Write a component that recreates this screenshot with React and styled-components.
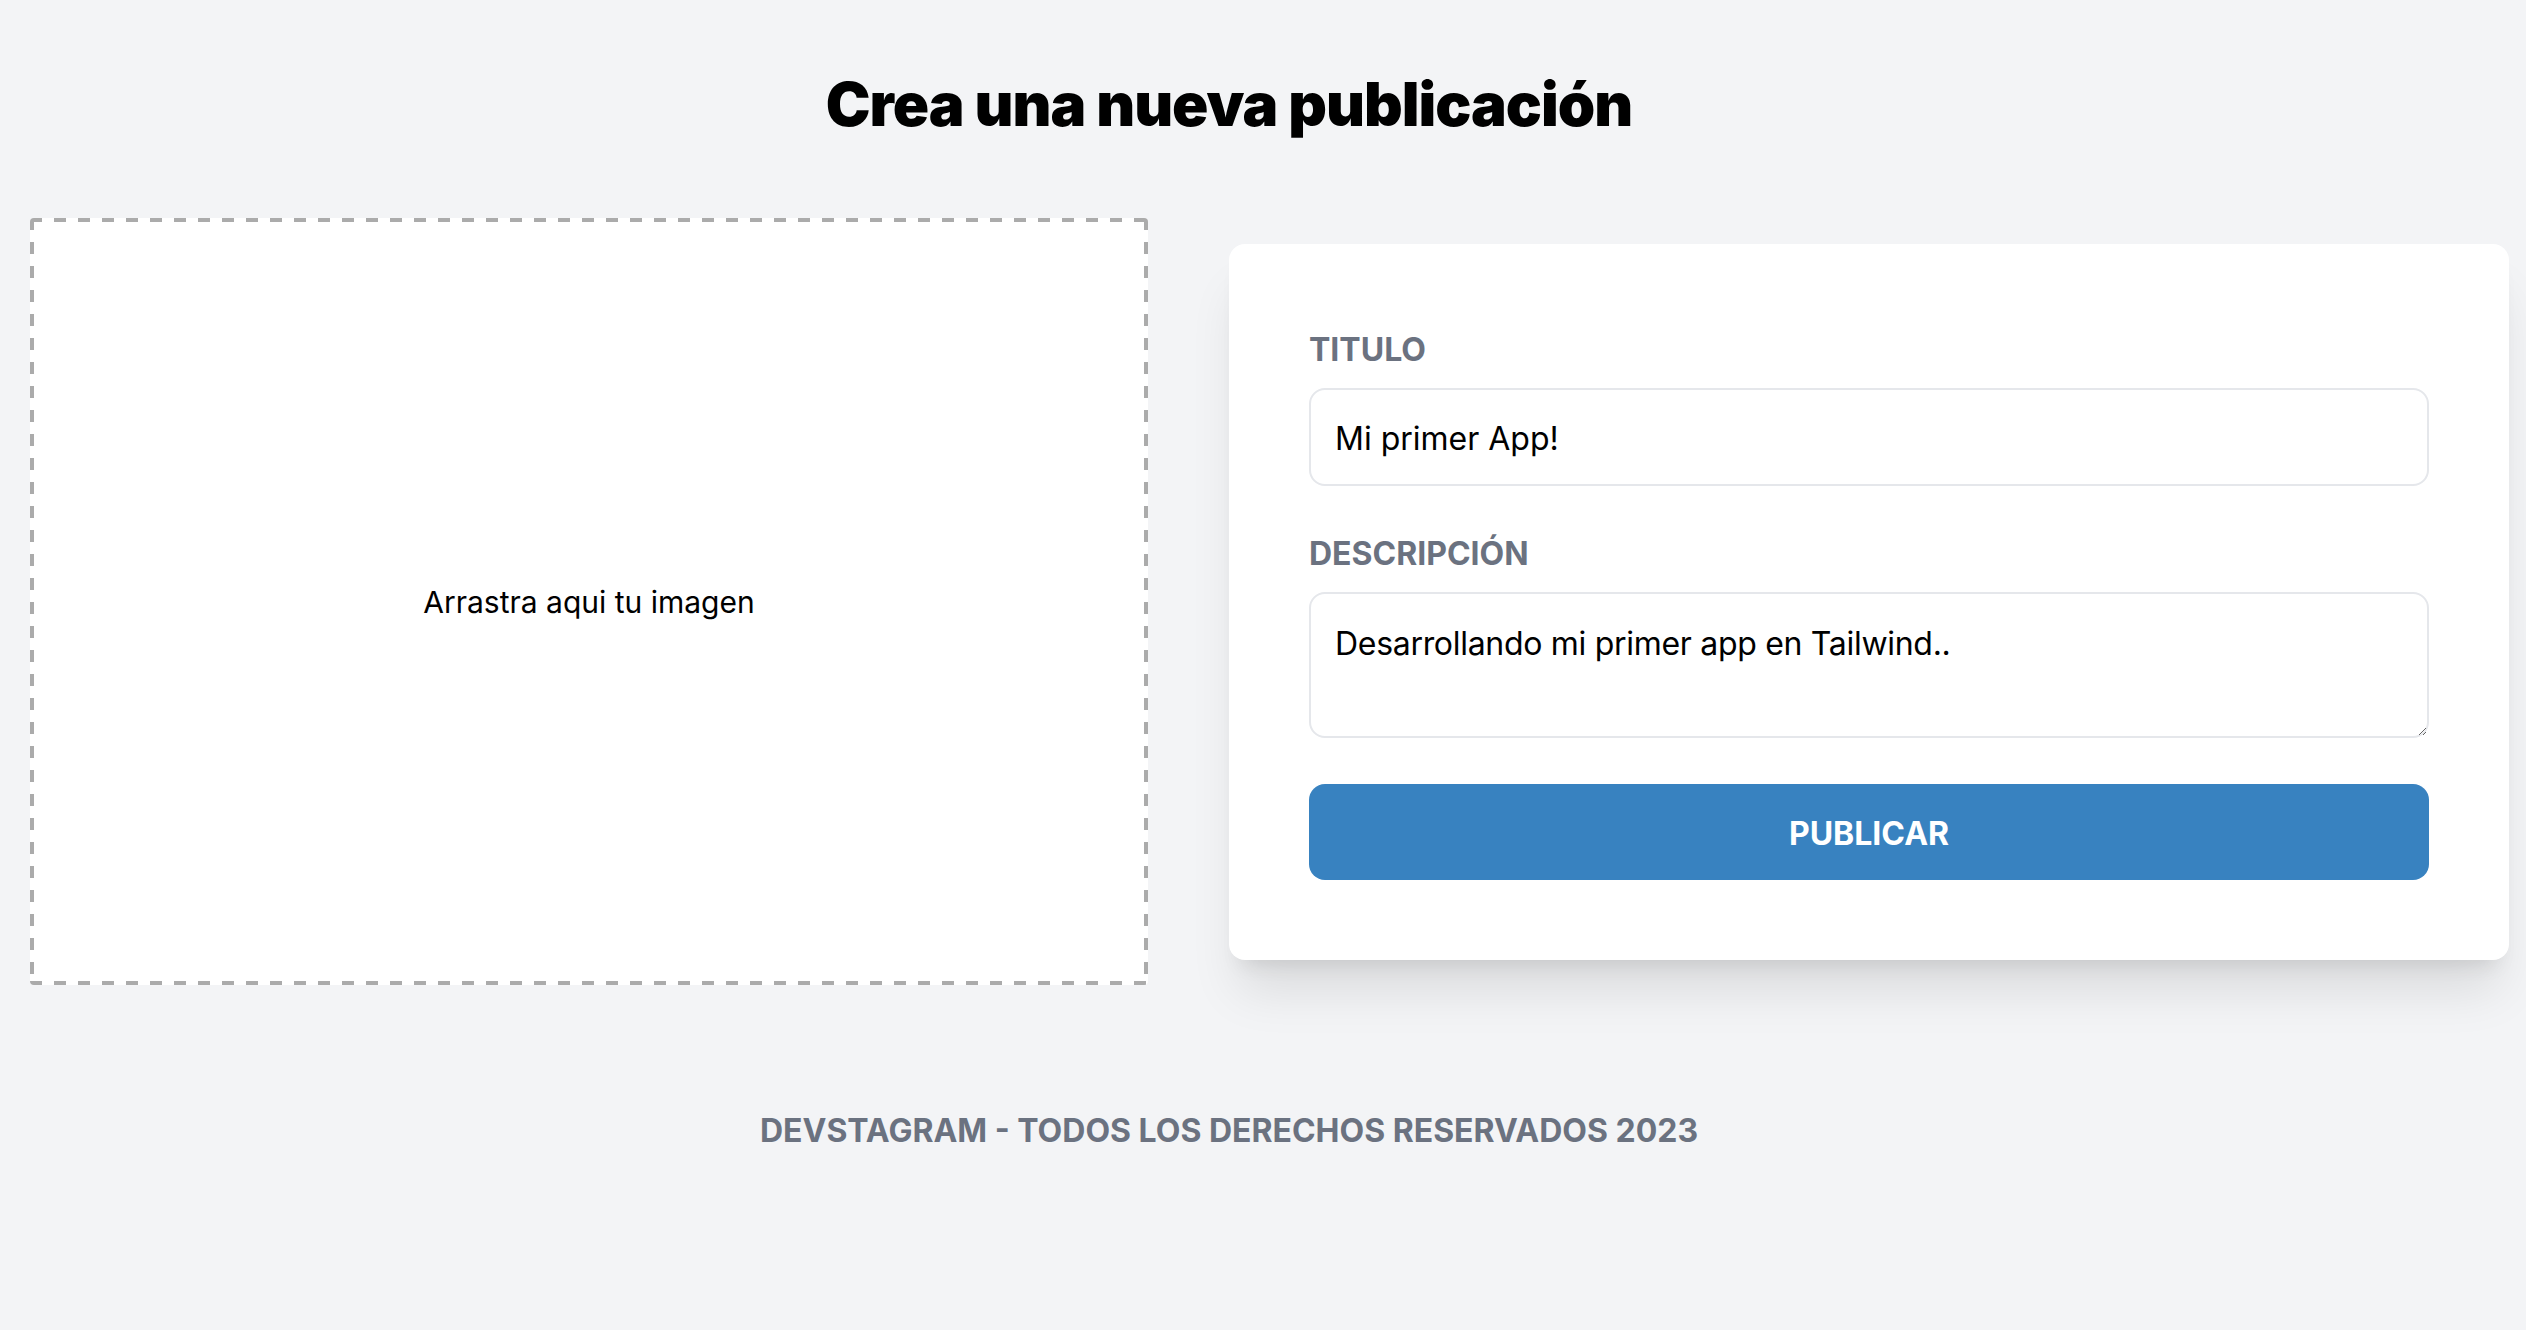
import React from 'react';
import styled, { createGlobalStyle } from 'styled-components';

const GlobalStyle = createGlobalStyle`
  body {
    margin: 0;
    background: #f3f4f6;
    font-family: Inter, "Noto Sans", sans-serif;
    color: #000;
  }
`;

const dash = '#ababab';

const Page = styled.main`
  width: 2526px;
  padding-top: 68px;
`;

const Heading = styled.h2`
  width: 2458px;
  margin: 0 0 78px;
  text-align: center;
  font-size: 60px;
  line-height: 72px;
  font-weight: 900;
  letter-spacing: -1px;
`;

const Row = styled.div`
  display: flex;
  align-items: center;
  gap: 81px;
  padding-left: 30px;
`;

// dashed edge drawn with gradients so the dash length matches (12px on, 12px off)
const DropZone = styled.div`
  flex: 0 0 1118px;
  height: 767px;
  box-sizing: border-box;
  border-radius: 4px;
  background:
    repeating-linear-gradient(90deg, ${dash} 0 12px, transparent 12px 24px) left top / 100% 4px no-repeat,
    repeating-linear-gradient(90deg, ${dash} 0 12px, transparent 12px 24px) left bottom / 100% 4px no-repeat,
    repeating-linear-gradient(180deg, ${dash} 0 12px, transparent 12px 24px) left top / 4px 100% no-repeat,
    repeating-linear-gradient(180deg, ${dash} 0 12px, transparent 12px 24px) right top / 4px 100% no-repeat,
    #fff;
  display: flex;
  align-items: center;
  justify-content: center;
`;

const DropText = styled.p`
  margin: 0;
  font-size: 30px;
  line-height: 44px;
`;

const Card = styled.div`
  flex: 0 0 1280px;
  box-sizing: border-box;
  padding: 80px;
  background: #fff;
  border-radius: 16px;
  box-shadow: 0 40px 50px -10px rgba(0, 0, 0, 0.1), 0 16px 20px -12px rgba(0, 0, 0, 0.1);
`;

const Field = styled.div`
  margin-bottom: ${(p) => p.$spacing}px;
`;

const Label = styled.label`
  display: block;
  margin-bottom: 16px;
  padding-top: 2px;
  height: 46px;
  font-size: 32px;
  line-height: 48px;
  font-weight: 700;
  color: #6b7280;
  text-transform: uppercase;
`;

const Input = styled.input`
  display: block;
  width: 100%;
  height: 98px;
  box-sizing: border-box;
  padding: 4px 24px 0;
  border: 2px solid #e5e7eb;
  border-radius: 16px;
  font-family: inherit;
  font-size: 32px;
  color: #000;
  outline: none;
`;

const TextArea = styled.textarea`
  display: block;
  width: 100%;
  height: 146px;
  box-sizing: border-box;
  padding: 26px 24px 18px;
  border: 2px solid #e5e7eb;
  border-radius: 16px;
  font-family: inherit;
  font-size: 32px;
  line-height: 48px;
  letter-spacing: -0.3px;
  color: #000;
  outline: none;
`;

const Submit = styled.button`
  display: block;
  width: 100%;
  height: 96px;
  padding-top: 4px;
  border: none;
  border-radius: 16px;
  background: #3882c0;
  color: #fff;
  font-family: inherit;
  font-size: 32px;
  font-weight: 700;
  text-transform: uppercase;
  cursor: pointer;
`;

const Footer = styled.footer`
  width: 2458px;
  margin-top: 122px;
  text-align: center;
  font-size: 32px;
  line-height: 48px;
  font-weight: 700;
  color: #6b7280;
  text-transform: uppercase;
`;

const App = () => (
  <>
    <GlobalStyle />
    <Page>
      <Heading>Crea una nueva publicación</Heading>
      <Row>
        <DropZone>
          <DropText>Arrastra aqui tu imagen</DropText>
        </DropZone>
        <Card>
          <form onSubmit={(e) => e.preventDefault()}>
            <Field $spacing={42}>
              <Label htmlFor='titulo'>Titulo</Label>
              <Input id='titulo' type='text' defaultValue='Mi primer App!' />
            </Field>
            <Field $spacing={46}>
              <Label htmlFor='descripcion'>Descripción</Label>
              <TextArea id='descripcion' defaultValue='Desarrollando mi primer app en Tailwind..' />
            </Field>
            <Submit type='submit'>Publicar</Submit>
          </form>
        </Card>
      </Row>
      <Footer>DevStagram - Todos los derechos reservados 2023</Footer>
    </Page>
  </>
);

export default App;
